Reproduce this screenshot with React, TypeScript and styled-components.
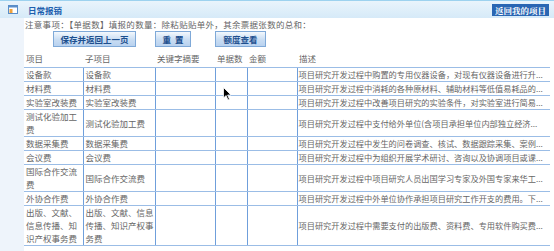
import React from 'react'
import styled, { createGlobalStyle } from 'styled-components'

const GlobalStyle = createGlobalStyle`
  html, body {
    margin: 0;
    padding: 0;
    width: 554px;
    height: 251px;
    overflow: hidden;
    background: #ffffff;
    font-family: "Noto Sans CJK SC", "Noto Sans", sans-serif;
  }
`

const Page = styled.div`
  position: relative;
  width: 554px;
  height: 251px;
  overflow: hidden;
  display: flex;
  flex-direction: column;
`

const TitleBar = styled.div`
  height: 18px;
  flex: none;
  display: flex;
  align-items: center;
  padding: 0 5px 0 8px;
  border-top: 1px solid #9dd2ef;
  background: linear-gradient(#e9f4fc, #d6eaf8);
  box-sizing: border-box;
  gap: 10px;
`

const Title = styled.span`
  font-size: 8.5px;
  font-weight: bold;
  color: #1d5fae;
  flex: 1;
`

const BackButton = styled.span`
  background: #2966b3;
  color: #ffffff;
  font-family: "Noto Serif CJK SC", "Noto Sans CJK SC", serif;
  font-size: 8.5px;
  font-weight: bold;
  line-height: 12px;
  padding: 0 3px;
`

const Body = styled.div`
  flex: 1;
  display: flex;
  background: #eef4fb;
`

const Content = styled.div`
  margin-left: 24px;
  flex: 1;
  background: #ffffff;
  font-size: 8.5px;
  color: #666666;
  min-width: 0;
`

const Notice = styled.div`
  line-height: 13px;
  padding: 0 0 0 1px;
  letter-spacing: 0.3px;
  white-space: nowrap;
`

const ButtonRow = styled.div`
  display: flex;
  height: 19px;
  align-items: flex-start;
`

const ActionButton = styled.button<{ $w: number; $ml: number }>`
  width: ${p => p.$w}px;
  margin-left: ${p => p.$ml}px;
  height: 16px;
  padding: 0;
  border: 1px solid #7fa9d8;
  background: linear-gradient(#f3f8fd, #c9ddf3 55%, #b9d2ef);
  color: #1c4f8e;
  font-family: "Noto Sans CJK SC", sans-serif;
  font-size: 8.5px;
  font-weight: bold;
`

const Table = styled.table`
  border-collapse: collapse;
  table-layout: fixed;
  width: 526px;
  font-size: 8.5px;
  color: #666666;
`

const HeadCell = styled.th`
  font-weight: normal;
  text-align: left;
  height: 17px;
  padding: 0 0 0 2px;
  line-height: 13px;
  vertical-align: middle;
  white-space: nowrap;
`

const Cell = styled.td<{ $first?: boolean }>`
  border-top: 1px solid #9bbde6;
  border-bottom: 1px solid #9bbde6;
  border-left: ${p => (p.$first ? 'none' : '1px solid #6f9fdb')};
  padding: 0 1px 0 2px;
  line-height: 13px;
  vertical-align: middle;
  word-break: break-all;
`

const DescCell = styled(Cell)`
  font-size: 8.2px;
  padding: 0 0 0 1px;
  white-space: nowrap;
`

const Cursor = styled.svg`
  position: absolute;
  left: 223px;
  top: 87px;
`

const rows: [string, string, string][] = [
  ['设备款', '设备款', '项目研究开发过程中购置的专用仪器设备，对现有仪器设备进行升...'],
  ['材料费', '材料费', '项目研究开发过程中消耗的各种原材料、辅助材料等低值易耗品的...'],
  ['实验室改装费', '实验室改装费', '项目研究开发过程中改善项目研究的实验条件，对实验室进行简易...'],
  ['测试化验加工费', '测试化验加工费', '项目研究开发过程中支付给外单位(含项目承担单位内部独立经济...'],
  ['数据采集费', '数据采集费', '项目研究开发过程中发生的问卷调查、核试、数据跟踪采集、案例...'],
  ['会议费', '会议费', '项目研究开发过程中为组织开展学术研讨、咨询以及协调项目或课...'],
  ['国际合作交流费', '国际合作交流费', '项目研究开发过程中项目研究人员出国学习专家及外国专家来华工...'],
  ['外协合作费', '外协合作费', '项目研究开发过程中外单位协作承担项目研究工作开支的费用。下...'],
  ['出版、文献、信息传播、知识产权事务费', '出版、文献、信息传播、知识产权事务费', '项目研究开发过程中需要支付的出版费、资料费、专用软件购买费...'],
]

const WindowIcon = () => (
  <svg width="10" height="9" viewBox="0 0 10 9">
    <rect x="0.5" y="0.5" width="9" height="8" fill="#ffffff" stroke="#5a8ec9" />
    <rect x="0.5" y="0.5" width="9" height="2" fill="#5a8ec9" />
    <rect x="1.5" y="4" width="3" height="4" fill="#f0a23c" />
  </svg>
)

const App = () => (
  <>
    <GlobalStyle />
    <Page>
      <TitleBar>
        <WindowIcon />
        <Title>日常报销</Title>
        <BackButton>返回我的项目</BackButton>
      </TitleBar>
      <Body>
        <Content>
          <Notice>注意事项：【单据数】填报的数量：除粘贴贴单外，其余票据张数的总和：</Notice>
          <ButtonRow>
            <ActionButton $w={83} $ml={29}>保存并返回上一页</ActionButton>
            <ActionButton $w={36} $ml={19}>重&nbsp;&nbsp;置</ActionButton>
            <ActionButton $w={51} $ml={24}>额度查看</ActionButton>
          </ButtonRow>
          <Table>
            <colgroup>
              <col style={{ width: 59 }} />
              <col style={{ width: 72 }} />
              <col style={{ width: 60 }} />
              <col style={{ width: 32 }} />
              <col style={{ width: 50 }} />
              <col style={{ width: 253 }} />
            </colgroup>
            <thead>
              <tr>
                <HeadCell>项目</HeadCell>
                <HeadCell>子项目</HeadCell>
                <HeadCell>关键字摘要</HeadCell>
                <HeadCell>单据数</HeadCell>
                <HeadCell>金额</HeadCell>
                <HeadCell>描述</HeadCell>
              </tr>
            </thead>
            <tbody>
              {rows.map(([item, sub, desc]) => (
                <tr key={item}>
                  <Cell $first>{item}</Cell>
                  <Cell>{sub}</Cell>
                  <Cell />
                  <Cell />
                  <Cell />
                  <DescCell>{desc}</DescCell>
                </tr>
              ))}
            </tbody>
          </Table>
        </Content>
      </Body>
      <Cursor width="9" height="14" viewBox="0 0 9 14">
        <path d="M0.5 0.5 L0.5 11 L3 8.5 L5 13 L6.5 12.3 L4.6 8 L8 8 Z" fill="#000" stroke="#fff" strokeWidth="0.8" />
      </Cursor>
    </Page>
  </>
)

export default App
